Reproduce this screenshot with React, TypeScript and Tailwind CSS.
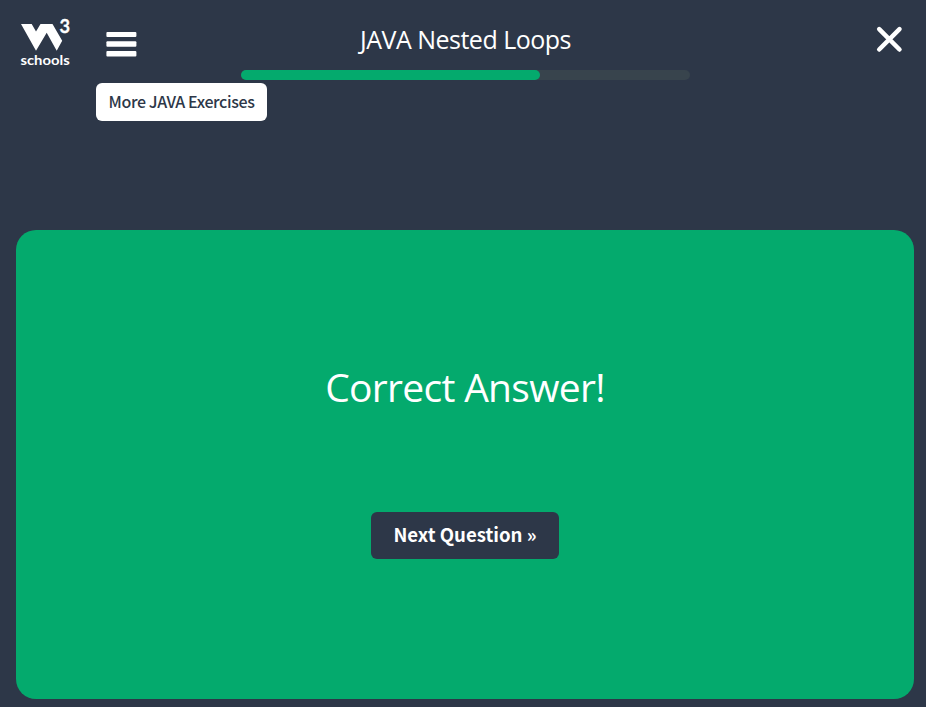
function Logo() {
  return (
    <svg className="h-[60px] w-[54px] shrink-0" viewBox="18 14 54 60" fill="#fff">
      <path d="M21 24H31.7L36 31.5L40.5 24H52.5L62.2 40.7L56.7 50.7L46.7 32.7L36 50.7Z" />
      <text x="59.4" y="33" fontSize="18" fontWeight="700" fontFamily="Lato, sans-serif" stroke="#fff" strokeWidth="0.3" textLength="10.6" lengthAdjust="spacingAndGlyphs">3</text>
      <text x="20.4" y="65" fontSize="14" fontWeight="700" fontFamily="Lato, sans-serif" textLength="49.3" lengthAdjust="spacingAndGlyphs">schools</text>
    </svg>
  );
}

export default function App() {
  return (
    <div className="flex h-[707px] w-[926px] flex-col overflow-hidden bg-[#2d3748] font-['Open_Sans','Noto_Sans',sans-serif] text-white">
      <header className="flex h-[230px] items-start">
        <div className="flex w-[241px] shrink-0 flex-col">
          <div className="flex h-[83px] items-start pt-[14px] pl-[18px]">
            <Logo />
            <svg aria-label="Menu" className="mt-[18px] ml-[34px] h-[25px] w-[31px]" viewBox="0 0 31 25" fill="#fff">
              <rect x="0.4" y="0" width="30" height="5" rx="1" />
              <rect x="0.4" y="9.3" width="30" height="5.4" rx="1" />
              <rect x="0.4" y="19" width="30" height="5.5" rx="1" />
            </svg>
          </div>
          <button className="ml-24 flex h-[38px] w-[171px] items-center justify-center rounded-[6px] bg-white pb-[2px] font-['Noto_Sans_CJK_SC',sans-serif] text-base font-medium tracking-[-0.38px] whitespace-nowrap text-[#2d3748]">
            <span>More JAVA Exercises</span>
          </button>
        </div>
        <div className="flex w-[449px] shrink-0 flex-col items-center">
          <h1 className="flex h-[70px] items-center pt-[10px] text-[25px] tracking-[-0.5px] whitespace-nowrap">JAVA Nested Loops</h1>
          <div className="h-[10px] w-full rounded-full bg-[#38444d]">
            <div className="h-full w-[299px] rounded-full bg-[#04aa6d]" />
          </div>
        </div>
        <button aria-label="Close" className="mt-[26px] ml-auto mr-[23px]">
          <svg className="size-[27px]" viewBox="0 0 27 27" stroke="#fff" strokeWidth="4.5" strokeLinecap="round">
            <path d="M3.2 3.2L23.5 23.5M23.5 3.2L3.2 23.5" />
          </svg>
        </button>
      </header>
      <main className="ml-4 flex h-[469px] w-[898px] shrink-0 flex-col items-center rounded-[20px] bg-[#04aa6d]">
        <h2 className="mt-[127px] h-[60px] text-[39px] leading-[60px] tracking-[-0.7px] whitespace-nowrap">Correct Answer!</h2>
        <button className="mt-[95px] flex h-[47px] w-[188px] items-center justify-center rounded-[6px] bg-[#2d3748] pb-[4px] font-['Noto_Sans_CJK_SC',sans-serif] text-[18.6px] font-bold whitespace-nowrap">
          <span>Next Question »</span>
        </button>
      </main>
    </div>
  );
}
